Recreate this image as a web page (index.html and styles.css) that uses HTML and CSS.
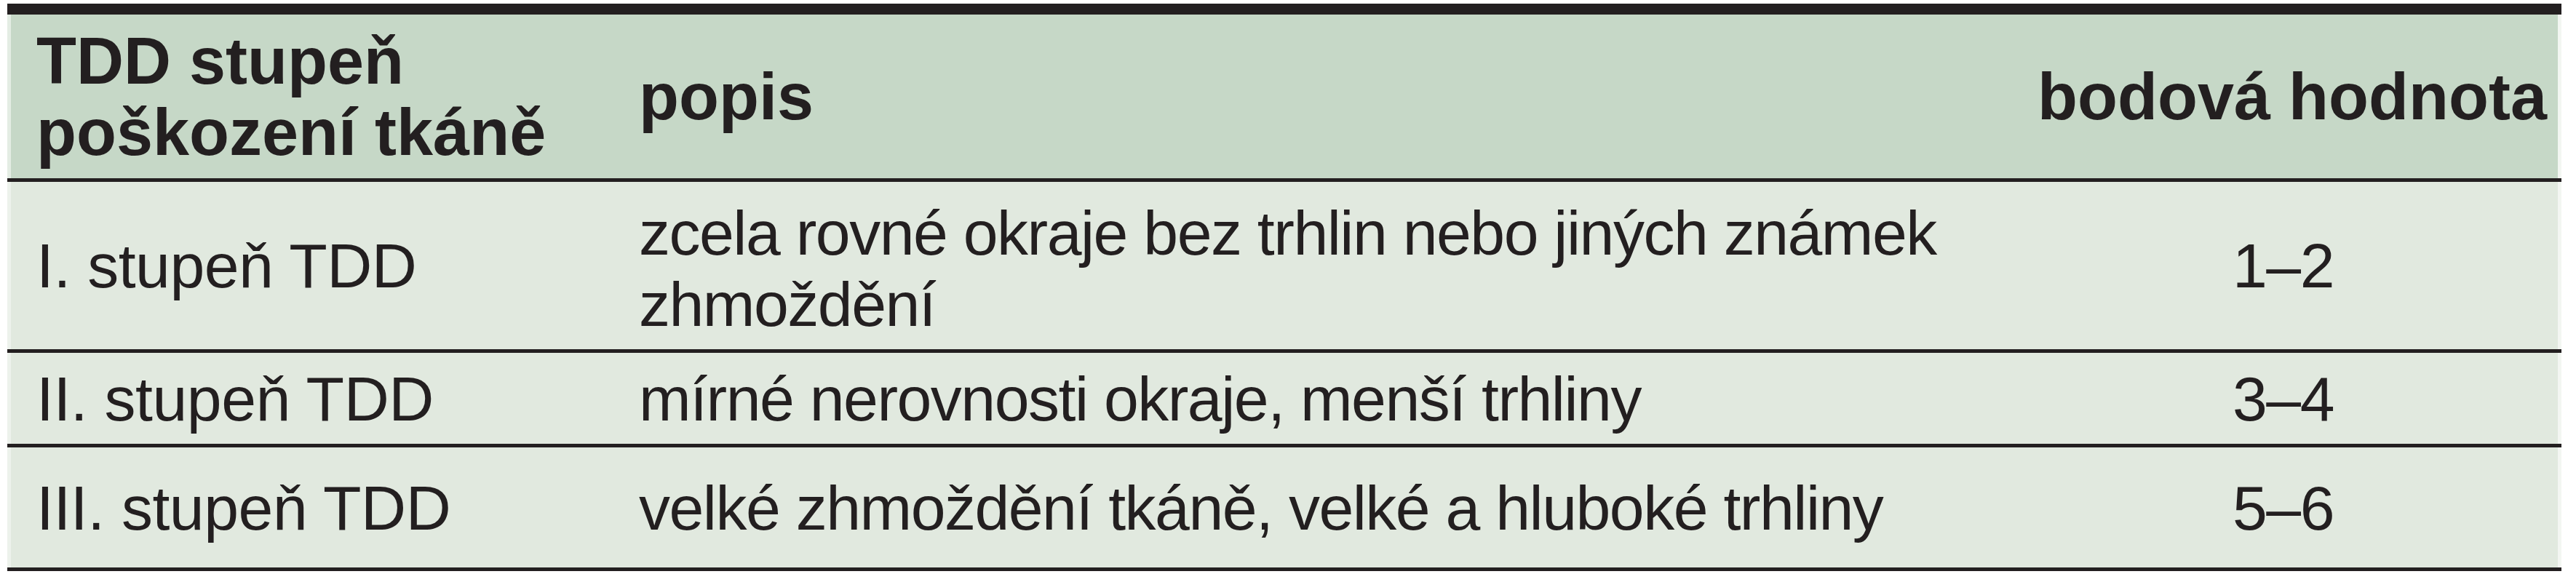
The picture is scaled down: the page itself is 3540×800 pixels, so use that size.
FILE: index.html
```html
<!DOCTYPE html>
<html lang="cs">
<head>
<meta charset="utf-8">
<title>TDD stupeň poškození tkáně</title>
<link rel="stylesheet" href="styles.css">
</head>
<body>
<div class="tbl">
  <div class="row head">
    <div class="cell c1">TDD stupeň poškození tkáně</div>
    <div class="cell c2">popis</div>
    <div class="cell c3">bodová hodnota</div>
  </div>
  <div class="row r1">
    <div class="cell c1">I. stupeň TDD</div>
    <div class="cell c2">zcela rovné okraje bez trhlin nebo jiných známek zhmoždění</div>
    <div class="cell c3">1–2</div>
  </div>
  <div class="row r2">
    <div class="cell c1">II. stupeň TDD</div>
    <div class="cell c2">mírné nerovnosti okraje, menší trhliny</div>
    <div class="cell c3">3–4</div>
  </div>
  <div class="row r3">
    <div class="cell c1">III. stupeň TDD</div>
    <div class="cell c2">velké zhmoždění tkáně, velké a hluboké trhliny</div>
    <div class="cell c3">5–6</div>
  </div>
</div>
</body>
</html>
```

FILE: styles.css
```css
html, body {
  margin: 0;
  padding: 0;
  background: #ffffff;
}

body {
  padding: 5px 0 0 10px;
  font-family: "Liberation Sans", Arial, sans-serif;
  color: #231f20;
}

.tbl {
  width: 3510px;
  border-top: 15px solid #231f20;
}

.row {
  display: grid;
  grid-template-columns: 828px 1917px 1fr;
  align-items: center;
  background: #e1e9df;
  border-bottom: 5px solid #231f20;
  box-shadow: inset 5px 0 0 #edf2ec, inset -5px 0 0 #f3f6f2;
  font-size: 86px;
  line-height: 98px;
  letter-spacing: -1.5px;
}

.cell {
  padding-left: 40px;
}

.row .c1 {
  font-size: 86px;
  letter-spacing: -0.5px;
}

.row .c3 {
  padding: 0 20px;
  text-align: center;
}

.head {
  height: 225px;
  background: #c6d8c7;
  box-shadow: inset 5px 0 0 #e4ede4, inset -5px 0 0 #f3f6f2;
  font-weight: bold;
  letter-spacing: 0;
}

.head .c1,
.head .c2,
.head .c3 {
  font-size: 90px;
  letter-spacing: 0;
}

.head .c3 {
  text-align: right;
}

.r1 {
  height: 230px;
}

.r1 .c2 {
  padding-top: 8px;
}

.r2 {
  height: 125px;
}

.r3 {
  height: 165px;
}
```
